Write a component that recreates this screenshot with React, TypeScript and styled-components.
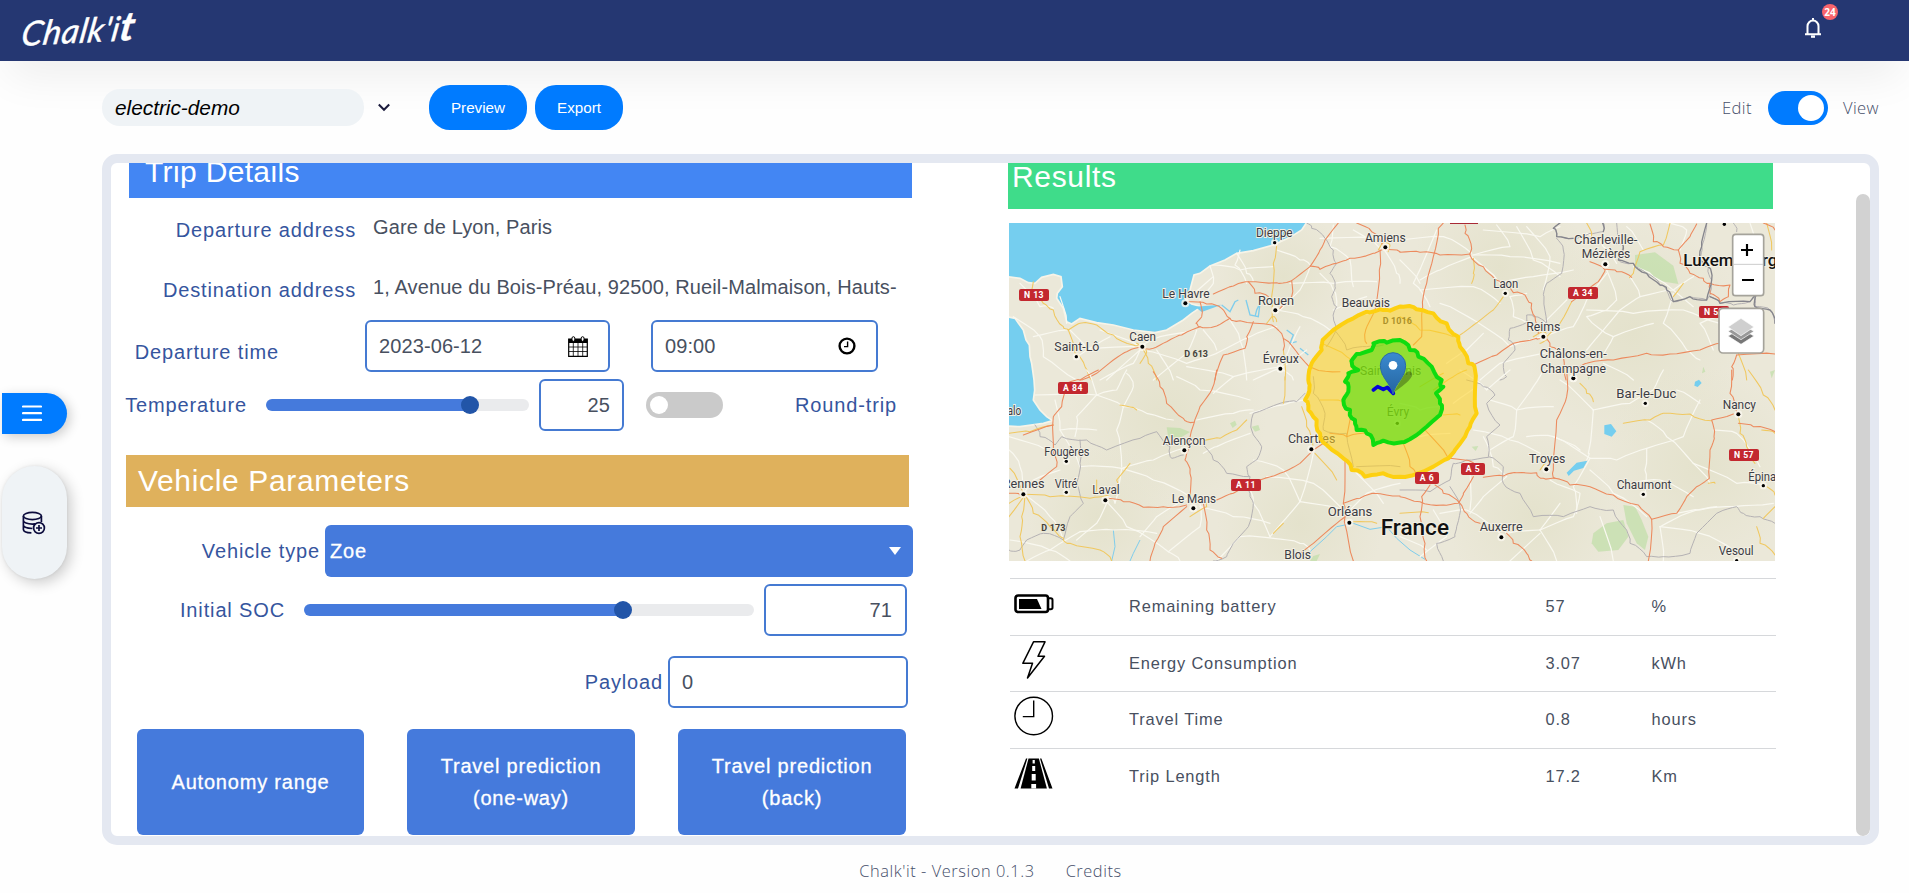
import React from 'react';
import styled, { createGlobalStyle, css } from 'styled-components';

const Global = createGlobalStyle`
  * { box-sizing: border-box; }
  body { margin: 0; background: #fefefe; font-family: 'Liberation Sans', Arial, sans-serif; overflow: hidden; }
`;

const Page = styled.div`
  width: 1909px; height: 893px; display: flex; flex-direction: column; overflow: hidden;
`;

/* ---------- header ---------- */
const Header = styled.header`
  height: 61px; flex: none; background: #253772; display: flex; justify-content: space-between;
  padding: 0 82px 0 19px; box-shadow: 0 22px 44px -8px rgba(0, 0, 0, 0.07);
`;
const Logo = styled.div`
  font: italic 400 34px/44px Lato, sans-serif; color: #fff; letter-spacing: 0.5px; margin-top: 9px;
  transform: rotate(-3deg) skewX(-12deg); transform-origin: 0 100%; height: 44px; white-space: nowrap;
  -webkit-text-stroke: 0.4px #fff;
`;
const LogoEnd = styled.span`font-size: 40px; font-weight: 700; line-height: 44px;`;
const Bell = styled.div`
  position: relative; width: 23px; margin-top: 17px; height: 22px;
`;
const Badge = styled.span`
  position: absolute; left: 18px; top: -13px; width: 16px; height: 16px; border-radius: 8px;
  background: #f8646c; color: #fff; font: 700 10px/16px 'Open Sans', sans-serif; text-align: center;
`;

/* ---------- toolbar ---------- */
const Toolbar = styled.div`
  height: 93px; flex: none; display: flex; align-items: center; padding: 0 30px 0 102px;
`;
const ProjectName = styled.div`
  width: 262px; height: 37px; border-radius: 18px; background: #eff3f6; padding-left: 13px;
  font: italic 20.8px/37px 'Liberation Sans', sans-serif; color: #000;
`;
const Chevron = styled.svg`margin: 0 38px 0 13px;`;
const Pill = styled.button<{ $w: number }>`
  width: ${p => p.$w}px; height: 45px; border: 0; border-radius: 21px; background: #007bff; color: #fff;
  font: 15.2px 'Liberation Sans', sans-serif; margin-right: 8px; padding: 0;
`;
const ModeSwitch = styled.div`
  margin-left: auto; display: flex; align-items: center; color: #464f6a;
  font: 300 16.6px 'Open Sans', sans-serif; letter-spacing: 0.4px;
`;
const Toggle = styled.span`
  width: 60px; height: 34px; border-radius: 17px; background: #007bff; margin: 0 15px 0 16px;
  display: flex; align-items: center; justify-content: flex-end; padding-right: 4px;
  &::after { content: ''; width: 26px; height: 26px; border-radius: 50%; background: #fff; }
`;

/* ---------- main ---------- */
const Main = styled.main`display: flex; height: 691px; flex: none;`;
const Side = styled.aside`
  width: 102px; flex: none; padding: 239px 0 0 2px; display: flex; flex-direction: column; gap: 32px;
`;
const MenuTab = styled.div`
  width: 65px; height: 41px; background: #007bff; border-radius: 0 21px 21px 0; padding: 12px 0 0 20px;
  box-shadow: 3px 3px 12px rgba(0, 0, 0, 0.2);
`;
const ToolPill = styled.div`
  width: 65px; height: 113px; background: #eff3f6; border-radius: 33px; display: flex; padding-right: 1px;
  align-items: center; justify-content: center; box-shadow: 4px 4px 14px rgba(0, 0, 0, 0.2), 0 0 3px rgba(0,0,0,.08);
`;
const Panel = styled.section`
  width: 1777px; height: 691px; border: 9px solid #e4e8f1; border-radius: 15px; background: #fff;
  display: flex; overflow: hidden;
`;
const Left = styled.div`width: 897px; flex: none; display: flex; flex-direction: column;`;
const Right = styled.div`width: 848px; flex: none;`;
const ScrollThumb = styled.div`width: 14px; height: 642px; margin-top: 31px; border-radius: 7px; background: #d2d2d2;`;

const Bar = styled.div<{ $bg: string; $h: number; $line: number; $ml: number; $w: number; $pad: number; $mt?: number; $ls?: number }>`
  flex: none; width: ${p => p.$w}px; height: ${p => p.$h}px; margin: ${p => p.$mt ?? 0}px 0 0 ${p => p.$ml}px;
  padding-left: ${p => p.$pad}px; background: ${p => p.$bg}; color: #fff; font-size: 30px;
  line-height: ${p => p.$line}px; letter-spacing: ${p => p.$ls ?? 0.65}px; white-space: nowrap;
`;
const Row = styled.div<{ $h?: number; $mt?: number }>`
  flex: none; display: flex; align-items: center; height: ${p => p.$h ?? 52}px; margin-top: ${p => p.$mt ?? 0}px;
  font-size: 20px; white-space: nowrap;
`;
const Label = styled.label<{ $w: number; $drop?: number; $align?: string }>`
  width: ${p => p.$w}px; flex: none; text-align: ${p => p.$align ?? 'right'}; color: #35559e; letter-spacing: 0.86px;
  padding-top: ${p => p.$drop ?? 0}px;
`;
const Value = styled.span`margin: 0 0 6px 17px; color: #48505f; letter-spacing: 0.11px;`;
const Field = styled.div<{ $w: number; $ml: number; $right?: boolean; $pr?: number }>`
  width: ${p => p.$w}px; height: 52px; margin-left: ${p => p.$ml}px; flex: none; border: 2px solid #457ad2; border-radius: 6px;
  display: flex; align-items: center; justify-content: space-between; padding: 0 ${p => p.$pr ?? 12}px 0 12px;
  color: #48505f; background: #fff; letter-spacing: 0.1px;
  ${p => p.$right && css`justify-content: flex-end;`}
`;
const Track = styled.div<{ $w: number; $ml: number; $fill: number }>`
  width: ${p => p.$w}px; height: 12px; flex: none; margin-left: ${p => p.$ml}px; border-radius: 6px; display: flex; align-items: center;
  background: linear-gradient(to right, #457adc ${p => p.$fill}px, #eaebed ${p => p.$fill}px);
  &::after { content: ''; width: 18px; height: 18px; border-radius: 50%; background: #2255a8; margin-left: ${p => p.$fill - 9}px; }
`;
const SmallSwitch = styled.div`
  width: 77px; height: 26px; border-radius: 13px; background: #cacaca; margin-left: 22px; padding: 4px; flex: none;
  &::after { content: ''; display: block; width: 18px; height: 18px; border-radius: 50%; background: #fff; }
`;
const Select = styled.div`
  width: 588px; height: 52px; margin-left: 5px; border-radius: 6px; background: #457adc; color: #fff; letter-spacing: 0.8px;
  display: flex; align-items: center; justify-content: space-between; padding: 0 12px 0 5px; -webkit-text-stroke: 0.3px #fff;
`;
const Actions = styled.div`
  display: grid; grid-template-columns: 227px 228px 228px; column-gap: 43px; margin: 21px 0 0 26px; height: 106px; flex: none;
`;
const Action = styled.button`
  border: 0; border-radius: 6px; background: #457adc; color: #fff; font: 20px/32px 'Liberation Sans', sans-serif;
  letter-spacing: 0.8px; padding: 0 20px; -webkit-text-stroke: 0.3px #fff;
`;

/* ---------- results ---------- */
const MapSvg = styled.svg`display: block; margin: 14px 0 17px 1px;`;
const Results = styled.div`margin-left: 2px; width: 766px; color: #48505f; font-size: 16.4px; letter-spacing: 0.85px;`;
const ResultRow = styled.div<{ $h: number }>`
  display: grid; grid-template-columns: 119px 416.5px 106px 1fr; height: ${p => p.$h}px; border-top: 1px solid #d6d8db;
  line-height: 54px;
`;
const IconCell = styled.div<{ $t: number }>`padding: ${p => p.$t}px 0 0 4px; line-height: 0;`;

const Footer = styled.footer`
  display: flex; justify-content: center; gap: 31px; padding: 14px 0 0 72px; color: #464f6a;
  font: 300 16.4px/23px 'Open Sans', sans-serif; letter-spacing: 0.56px;
`;

/* ---------- map data: 3 units per pixel, split in four tiles ---------- */
type Tile = { x: number; y: number; white: string[]; orange: string[]; yellow: string[]; border: string[] };
const tiles: Tile[] = [
  {
    x: 0, y: 0,
    white: [
      '630,348 640,400 600,450', '710,310 740,370 760,395', '720,300 705,345 740,400', '960,370 1000,420 1010,470', '1000,225 990,290 1050,330 1060,410',
      '830,300 900,330 930,345', '960,265 1120,265 1200,270', '870,400 1000,400 1130,395', '640,380 560,450', '820,350 720,360 640,345',
      '40,500 120,560 130,620 230,690', '100,560 200,540', '210,540 260,600 420,590', '230,620 330,560', '300,540 420,590 480,560 580,540',
      '320,690 420,600 560,640 650,610', '470,600 520,690', '460,690 560,610 590,540', '650,610 750,560 830,530', '560,650 700,680 850,650 920,600',
      '690,510 720,570 740,690', '610,540 650,600', '760,690 840,655 870,590 900,530', '850,660 880,690', '830,480 910,500 990,540', '1000,480 1100,440',
      '1150,295 1190,370 1200,400', '1060,240 1140,295', '840,480 900,420 930,350', '180,440 200,520', '60,400 120,470 160,475', '420,600 400,640 300,690',
    ],
    orange: [
      '640,432 700,408 745,395 830,398 875,392 930,350 960,300 975,270 1015,219', '930,348 960,358 1010,340 1050,325 1120,310 1150,298',
      '1070,219 1115,245 1150,290', '1150,298 1200,305', '1140,300 1138,360 1125,480 1097,540 1100,580', '560,455 620,462 665,475 690,505 720,512 815,525 850,565 900,620 940,655 1020,665',
      '745,395 765,430 805,440', '875,392 875,440 840,475', '600,455 605,500 588,520 600,530 650,528 690,505', '600,530 545,555 500,575 460,595 425,590',
      '425,590 380,605 340,630 290,670 240,690', '760,515 740,560 735,595 670,615 645,690', '850,565 850,600',
    ],
    yellow: [
      '100,395 90,430 130,460 160,480 190,530 205,540 240,520 290,525 340,555 400,585 425,590', '205,540 225,610 255,650 275,690', '830,285 820,340 815,440 820,515',
      '425,590 445,640 470,690', '850,600 855,690', '800,520 815,500 830,515', '410,580 440,605 420,640', '1135,300 1145,280 1170,285 1165,305',
      '965,580 1040,620 1060,660',
    ],
    border: ['920,219 935,235 975,265 1000,300 1010,340 990,370 1005,410 995,440 1010,470 1000,500 1008,540 980,590', '1008,545 1040,600 1100,590 1150,585'],
  },
  {
    x: 1200, y: 0,
    white: [
      '0,270 130,260 215,310', '110,240 40,400 90,470', '290,225 330,290 220,315', '250,240 420,260 480,230', '215,315 330,320 480,340', '350,230 400,330 480,380',
      '215,320 120,360 60,390', '215,320 300,400 400,380 520,360', '60,420 220,410 300,460', '230,515 120,460', '230,515 330,590 430,560', '430,560 520,530 560,450 620,370',
      '430,550 340,500 330,440 380,430', '620,360 650,450 620,480 560,500 640,560', '690,380 720,440 660,480 560,600', '720,440 820,420 880,380', '560,480 700,490 850,480 960,520',
      '600,630 640,560 760,520', '820,430 790,520 860,600 900,630', '610,640 700,690', '250,550 200,600 140,640', '0,330 60,400', '500,450 430,520', '650,340 610,290 560,250',
      '730,300 680,230', '880,470 760,380 700,350', '940,600 900,520 960,500', '840,300 860,240 800,219', '1050,219 1070,300', '480,600 300,640 240,690', '380,230 450,320 430,420',
    ],
    orange: [
      '130,219 115,235 100,320 80,400 68,470 65,560 40,585', '0,307 60,307 120,315 210,312', '195,225 195,250 215,295 210,315 250,350 285,388 340,428 375,435 395,460 405,500 415,550',
      '220,645 290,615 340,580 410,565 430,560', '435,560 450,590 490,620 498,690', '530,655 560,640 640,630 740,610 810,612 900,600 960,580', '570,335 615,360 595,395 565,415 515,455',
      '615,358 650,365 695,382', '750,222 760,275 790,290 835,300 870,260 890,222', '835,300 840,340 870,370 910,385 930,400 930,430 960,455 985,440 990,405 930,400', '1010,615 1125,612', '1010,615 995,650 997,690', '1090,219 1125,240',
    ],
    yellow: [
      '220,325 220,370 215,400', '310,440 280,480 235,515 180,555', '515,455 480,520 440,560', '400,560 430,545 440,570 420,580', '560,219 575,260 560,280', '810,219 790,285 720,305 700,370 690,382', '850,400 820,440',
      '1015,610 1040,690', '1100,219 1115,300', '0,500 60,540 160,560',
    ],
    border: [
      '480,219 460,235 470,260 520,265 570,250 610,245 608,219', '470,265 490,300 485,370 440,400 432,440 440,520 400,500 380,495 385,515 330,535 325,570 345,600 310,640 320,680 300,690',
      '650,219 650,280 670,290 655,330 700,340 740,370 780,405 800,420 820,455 870,440 920,450 930,430 935,390 925,350 900,330 905,290 920,219', '1000,219 1010,245', '930,440 960,460 1000,465 1050,455 1070,430 1065,470 1110,480 1125,520',
    ],
  },
  {
    x: 0, y: 660,
    white: [
      '105,75 290,75 350,60 380,0', '290,75 260,0', '290,75 230,140 225,200', '290,75 370,110 440,130 520,150', '370,110 350,180 365,290', '370,110 400,50 380,10', '165,90 180,180 290,180',
      '180,180 240,290 365,295', '365,295 460,270 550,235', '365,295 460,330 570,380', '365,295 345,400 320,380', '570,380 470,440 420,500', '320,395 380,470 505,545', '505,545 600,470 600,400',
      '505,545 540,573', '600,410 700,440 810,460', '810,500 900,395 940,250', '810,500 760,400 740,340', '900,395 1030,420', '900,395 850,300 760,270', '750,190 650,230 610,250', '750,130 850,105 920,90',
      '590,150 700,130 760,120', '240,485 340,480 470,490', '240,485 150,540 80,573', '180,300 100,330 70,370', '27,200 140,240 200,270', '70,370 150,440 190,510', '320,400 290,460 230,510', '70,373 60,290 27,240',
      '640,70 700,20', '530,20 600,60 750,90', '1040,430 940,340 800,320', '820,505 900,520 930,540', '820,505 720,500 650,573', '1040,430 1100,370 1200,340', '210,573 150,540 30,510', '1060,300 1150,400',
    ],
    orange: [
      '295,0 240,30 200,40 185,110 160,140 160,250 170,290 120,330', '460,5 480,50 500,100 550,145 582,157', '650,0 635,60 600,110 582,160 565,240 555,270 570,310 570,380', '325,385 370,395 430,412 490,410 560,405',
      '650,390 700,370 780,330 840,310 900,280 940,240', '940,240 980,215', '560,410 490,470 465,520 450,573', '610,400 620,480 630,540 665,565', '1035,270 1030,400 1033,455 1060,573', '1050,430 1010,460 940,520 900,550',
      '1030,400 1080,385 1120,370 1200,378', '70,195 160,165', '27,370 60,375', '990,190 1040,200 1100,190', '1040,200 1050,130',
    ],
    yellow: [
      '27,190 90,185 160,165', '75,373 150,380 270,385 325,375', '75,375 65,440 60,500 75,573', '75,375 27,440', '75,375 27,400', '75,375 100,430 150,470 190,505 210,520 300,540 335,573', '70,370 30,295', '290,330 285,375', '390,280 350,330 345,375',
      '600,380 620,410 570,440', '610,212 660,205 710,180 740,150', '855,20 850,100', '905,110 920,170 940,240', '945,250 1010,330', '960,90 1030,95', '1060,455 1130,460', '850,460 820,490', '360,105 410,120',
    ],
    border: [
      '105,165 120,200 165,225 185,200 260,210 320,240 420,205 470,185 510,230 515,265 550,255', '240,210 240,280 230,340 250,400 210,440 190,510 130,490 80,510 60,540 27,540', '610,225 640,270 680,310 750,320 750,370 760,400 745,470 700,520 680,560 640,573',
      '915,70 890,95 840,100 760,130 755,180 785,230 770,270 740,290 750,320', '940,20 940,70 975,130 970,180 1040,190 1060,290', '1070,290 1200,290',
    ],
  },
  {
    x: 1200, y: 660,
    white: [
      '270,90 350,120 460,110', '350,120 340,200 270,240', '350,120 400,50 430,0', '580,120 480,30', '580,120 565,250 560,270', '580,120 690,100 760,60 790,0', '570,265 460,200 380,200', '570,265 650,270 740,235 850,200 900,90',
      '740,235 735,300 735,370', '570,265 520,350 530,430', '420,480 320,490 280,480', '420,480 520,440 540,370 450,330', '420,480 470,573', '320,320 250,380 210,430', '320,320 280,290 250,200', '570,300 640,370 740,440',
      '780,470 860,430 950,410', '780,470 900,490 1000,540', '780,470 790,573', '830,430 900,420 1000,410 1120,400', '880,280 1010,340 1090,345', '880,280 800,200 740,150', '880,280 930,340', '210,300 210,420', '330,573 420,490', '180,0 260,60 330,0',
      '420,250 330,210 220,180', '100,420 140,500 60,560', '0,100 60,120 130,110', '150,190 60,200', '940,180 1010,190 1080,290', '600,440 640,573', '880,380 780,330 690,340', '120,430 200,420 300,490', '900,100 830,60', '460,200 540,240', '480,400 420,480',
      '0,500 80,540', '230,50 160,100',
    ],
    orange: [
      '500,0 500,80 470,150 460,300 465,325', '150,265 220,278', '250,322 310,318 350,308 410,308 430,325 465,325 510,345 570,350 640,375 715,405 755,448 745,573', '755,448 830,430 860,380 890,350 928,325 930,240 942,200 935,150 1000,132', '995,0 990,70 1010,130',
      '1015,160 1060,170 1125,185', '105,345 130,370 180,400 200,430 240,460', '220,320 190,370 175,400 130,405 60,395 0,380', '90,345 65,380 60,440 75,520 80,573', '320,490 340,520 380,550 395,573', '75,180 145,265', '10,220 30,290 60,340',
    ],
    yellow: [
      '540,40 560,70 580,95', '670,160 750,150 790,130 870,132 935,152', '1015,140 1020,190 1040,230 1065,280', '1100,350 1125,375', '1045,0 1090,75 1125,120', '1070,470 1080,520 1125,555', '0,430 85,428', '925,340 945,340',
      '1090,445 1125,410', '100,60 160,20 200,0', '130,135 180,135', '420,300 440,270', '1085,180 1125,190', '60,50 130,10',
    ],
    border: [
      '200,30 250,50 285,75 260,100 300,165 260,200 265,260 310,290 310,340 360,370 400,440 490,440 570,410 640,420 680,480 690,520 740,560 790,560 870,550 890,490 950,430 1010,410 1030,430 1080,440 1125,460',
      '0,360 90,365 150,330 160,280 200,270 265,262', '150,350 180,410 170,470 165,500 110,520 130,573',
    ],
  },
];

const cities: [string, number, number, number, number, number, number][] = [
  ['Dieppe', 768, 262, 110, 824, 278, 5], ['Amiens', 1095, 276, 122, 1156, 292, 6], ['Le Havre', 487, 443, 142, 556, 460, 6], ['Rouen', 774, 464, 108, 826, 481, 6],
  ['Beauvais', 1025, 470, 145, 1099, 487, 3], ['Caen', 388, 574, 80, 427, 590, 6], ['Saint-Lô', 163, 602, 135, 229, 620, 5], ['Évreux', 788, 639, 109, 841, 656, 6],
  ['Laon', 1480, 415, 75, 1516, 430, 5], ['Charleville-', 1722, 283, 190, 1816, 343, 6], ['Mézières', 1745, 325, 146, 1816, 343, 6], ['Reims', 1579, 542, 102, 1630, 560, 6],
  ['Châlons-en-', 1619, 625, 201, 1720, 685, 6], ['Champagne', 1621, 668, 197, 1720, 685, 6], ['Bar-le-Duc', 1849, 743, 180, 1936, 760, 5], ['Nancy', 2168, 776, 100, 2215, 793, 6],
  ['Troyes', 1587, 940, 109, 1639, 958, 6], ['Chaumont', 1850, 1017, 164, 1930, 1033, 5], ['Épinal', 2245, 993, 92, 2290, 1007, 5], ['Vesoul', 2156, 1216, 105, 2210, 1232, 5],
  ['Auxerre', 1439, 1144, 129, 1504, 1162, 6], ['Orléans', 983, 1099, 134, 1048, 1118, 6], ['Blois', 853, 1227, 80, 892, 1243, 4], ['Alençon', 488, 885, 129, 553, 901, 6],
  ['Fougères', 133, 917, 135, 199, 934, 5], ['Vitré', 164, 1013, 68, 199, 1027, 5], ['Laval', 277, 1033, 82, 316, 1051, 6], ['Rennes', 8, 1014, 126, 70, 1033, 6], ['Le Mans', 515, 1059, 133, 580, 1075, 6],
  ['Chartres', 864, 880, 142, 934, 898, 6], ['St-Malo', -40, 796, 104, -20, 800, 5], ['Saint-Denis', 1080, 675, 184, 1180, 700, 0], ['Évry', 1160, 797, 68, 1192, 820, 5],
];
const shields: [string, number, number, number][] = [
  ['N 13', 57, 417, 90], ['A 34', 1704, 411, 90], ['N 52', 2097, 468, 90], ['A 84', 174, 696, 90], ['A 11', 693, 987, 90], ['A 5', 1383, 939, 72], ['A 6', 1245, 966, 72], ['N 57', 2187, 897, 90],
];

/* adds small teeth between the corner points of an outline */
const jagged = (pts: string, steps: number, size: number) => {
  const p = pts.split(' ').map(s => s.split(',').map(Number));
  const out: string[] = [];
  p.forEach(([x, y], i) => {
    const [nx, ny] = p[(i + 1) % p.length];
    for (let k = 0; k < steps; k++) {
      const t = k / steps;
      const n = k === 0 ? 0 : Math.sin((i * steps + k) * 12.9) * size;
      out.push(`${(x + (nx - x) * t + n).toFixed(1)},${(y + (ny - y) * t - n).toFixed(1)}`);
    }
  });
  return out;
};
/* same for an open line: the stretch that closes the loop is dropped */
const wavy = (pts: string) => {
  const last = pts.split(' ').pop();
  return [...jagged(pts, 4, 4).slice(0, -4), last].join(' ');
};
const wide = jagged('1100,485 1060,505 1000,540 968,570 965,600 935,640 925,690 928,715 915,750 925,780 950,810 960,850 980,885 1030,925 1055,960 1095,980 1150,970 1200,980 1260,968 1300,950 1345,925 1365,900 1395,860 1410,830 1430,790 1425,720 1425,660 1405,640 1380,590 1375,560 1340,520 1300,490 1250,478 1210,470 1170,482 1140,478', 3, 5).join(' ');
const near = jagged('1200,570 1160,578 1120,580 1115,600 1070,612 1055,635 1075,660 1045,670 1035,695 1045,725 1030,750 1050,780 1065,810 1070,840 1100,850 1120,885 1150,872 1205,877 1250,855 1280,830 1320,795 1320,760 1308,730 1330,710 1325,690 1295,650 1255,620 1230,600', 3, 6).join(' ');

const Lines = ({ list, color, w }: { list: string[]; color: string; w: number }) => (
  <g fill="none" stroke={color} strokeWidth={w} strokeLinejoin="round" strokeLinecap="round">
    {list.map((p, i) => <polyline key={i} points={p} />)}
  </g>
);

const MapView = () => (
  <MapSvg width="766" height="338" viewBox="27 219 2298 1014" fontFamily="Roboto, sans-serif">
    <defs>
      <radialGradient id="relief"><stop offset="0" stopColor="#e4e2cc" /><stop offset="1" stopColor="#e4e2cc" stopOpacity="0" /></radialGradient>
      <linearGradient id="pin" x1="0" y1="0" x2="0" y2="1"><stop offset="0" stopColor="#3b8ad0" /><stop offset="1" stopColor="#2565a0" /></linearGradient>
    </defs>
    <rect x="27" y="219" width="2298" height="1014" fill="#ebe8d9" />
    {[[500, 800, 300], [850, 380, 200], [1900, 550, 340], [2100, 950, 300], [1600, 1100, 260], [1500, 350, 260], [300, 1100, 220], [900, 1120, 250]].map(([x, y, r]) => (
      <circle key={x} cx={x} cy={y} r={r} fill="url(#relief)" />
    ))}
    <g fill="#b9dea0" opacity="0.6">
      <path d="M500 832l40 2 30 12-25 15-40 2z" />
      <path d="M1905 315l60-8 55 40 15 55-50-8-40-25-40-15z" />
      <path d="M1870 1065l35 5 20 40 20 50-10 40-25-20-30-60z" />
      <path d="M1780 1150l40-30 50-10 15 50-30 40-60 5-20-25z" />
      <path d="M1760 660l15 10-10 20zM755 830l20-5 5 15-15 5zM690 820l15-8 5 12-12 10zM1415 890l20-2-8 15zM2110 650l6 15-10 5zM940 1218l20-6-10 21h-20zM2325 660l-15 5 5 20z" />
    </g>
    <g fill="#75ceef" stroke="#f7f4e8" strokeWidth="5">
      <path d="M20 210H925L905 240 870 262 820 285 760 302 710 310 675 330 630 348 600 370 582 375 570 420 557 448 575 462 605 470 575 490 550 510 500 540 465 548 400 540 340 525 290 518 240 505 215 522 200 515 190 475 170 445 172 430 187 410 183 380 160 373 125 382 105 400 85 398 60 385 20 380Z" />
      <path d="M20 500L45 505 70 540 78 570 88 585 90 620 95 640 102 690 104 720 100 750 120 780 140 800 158 812 130 820 60 830 20 828Z" />
    </g>
    <g fill="#75ceef">
      <path d="M1813 826l20-4 16 22-14 16-22-8z" /><path d="M1700 968l30-30 32-6-12 22-28 8-16 16zM2085 695l12-6 8 10-12 12-10-4z" />
      <path d="M585 470l80-6-60 22z" />
    </g>
    <g fill="none" stroke="#7fcdec" strokeWidth="4">
      <polyline points="665,465 690,485 705,455 715,450" /><polyline points="738,450 750,495 775,500 780,460 770,480 765,500" />
      <polyline points="860,540 880,555 870,580 890,575" /><polyline points="900,595 925,615" /><polyline points="340,1140 345,1190 335,1233" strokeWidth="3" />
      <polyline points="420,1170 400,1210 390,1233" strokeWidth="3" /><polyline points="930,1205 980,1160 1010,1130 1060,1120 1110,1138 1160,1130 1190,1165 1230,1200 1275,1228" strokeWidth="3" />
    </g>
    {tiles.map(t => (
      <g key={`${t.x}-${t.y}`} transform={`translate(${t.x} ${t.y})`}>
        <Lines list={t.white.map(wavy)} color="#f9f8f0" w={3.6} />
        <Lines list={t.border.map(wavy)} color="#b5b2b4" w={3} />
        <Lines list={t.yellow.map(wavy)} color="#f0c860" w={3.2} />
        <Lines list={t.orange.map(wavy)} color="#ec8a5e" w={3.2} />
      </g>
    ))}
    <Lines list={['1850,280 1870,290 1855,330 1900,340 1940,370 1980,405 2000,420 2020,455 2070,440 2120,450 2135,390 2125,350 2100,330 2105,290 2120,219', '1680,219 1660,235 1670,260 1720,265', '1808,219 1810,245', '2130,440 2160,460 2250,455 2270,430 2265,470 2310,480 2325,520'].map(wavy)} color="#85858c" w={4} />
    <g fontSize="40" fill="#3c3c44">
      {cities.map(([n, x, y, w, dx, dy, r]) => (
        <g key={n}>
          {r > 0 && <circle cx={dx} cy={dy} r={r + 6} fill="#faf8ef" opacity="0.8" />}
          {r > 0 && <circle cx={dx} cy={dy} r={r} fill="#000" />}
          <text x={x} y={y} textLength={w} lengthAdjust="spacingAndGlyphs" stroke="#f3f0e4" strokeWidth="6" paintOrder="stroke">{n}</text>
        </g>
      ))}
      <circle cx="2173" cy="223" r="5" fill="#000" />
      <g fontWeight="700" fontSize="27" fill="#44423c">
        <text x="553" y="622" textLength="71">D 613</text>
        <text x="1148" y="521" textLength="88">D 1016</text>
        <text x="124" y="1142" textLength="72">D 173</text>
      </g>
      <text x="1142" y="1155" textLength="205" lengthAdjust="spacingAndGlyphs" fontSize="64" fontWeight="500" fill="#111" stroke="#f3f0e4" strokeWidth="6" paintOrder="stroke">France</text>
      <text x="2050" y="347" textLength="282" lengthAdjust="spacingAndGlyphs" fontSize="49" fontWeight="500" fill="#111" stroke="#f3f0e4" strokeWidth="6" paintOrder="stroke">Luxembourg</text>
    </g>
    <rect x="1350" y="210" width="84" height="12" fill="#a82a35" />
    <polygon points={wide} fill="#ffd21e" fillOpacity="0.55" stroke="#fdd010" strokeWidth="12" strokeLinejoin="round" />
    {shields.map(([n, x, y, w]) => (
      <g key={n}>
        <rect x={x} y={y} width={w} height="36" rx="6" fill="#c3282f" />
        <text x={x + w / 2} y={y + 28} textAnchor="middle" fontSize="26" fontWeight="700" letterSpacing="1.5" fill="#fff">{n}</text>
      </g>
    ))}
    <polygon points={near} fill="#3fe000" fillOpacity="0.55" stroke="#0fdc0f" strokeWidth="12" strokeLinejoin="round" />
    <polyline points="1120,720 1133,710 1150,718 1162,712 1180,730" fill="none" stroke="#0606d8" strokeWidth="11" strokeLinecap="round" strokeLinejoin="round" />
    <path d="M1180 728L1212 675Q1228 655 1236 670T1180 728" fill="#000" opacity="0.3" />
    <path d="M1179 732C1172 700 1141 682 1141 646a38 38 0 0 1 76 0C1217 682 1186 700 1179 732Z" fill="url(#pin)" stroke="#2a6aa8" strokeWidth="3" />
    <circle cx="1179" cy="646" r="13" fill="#fff" />
    <g stroke="#a5a39b" strokeWidth="5">
      <rect x="2198" y="253" width="93" height="184" rx="9" fill="#fff" />
      <rect x="2157" y="475" width="134" height="134" rx="12" fill="#fff" />
      <path d="M2200 343H2289" stroke="#ccc" strokeWidth="3" />
    </g>
    <path d="M2223 300H2259M2241 282V318M2226 390H2262" stroke="#000" strokeWidth="6.5" />
    <g stroke="#fff" strokeWidth="2">
      <path d="M2184 558L2223 536 2262 558 2223 583Z" fill="#777" />
      <path d="M2184 544L2223 522 2262 544 2223 569Z" fill="#999" />
      <path d="M2184 531L2223 505 2262 531 2223 557Z" fill="#cfcfcf" />
    </g>
  </MapSvg>
);

const CalendarIcon = () => (
  <svg width="20" height="21" viewBox="0 0 20 21">
    <path d="M.7 3h18.6v17.3H.7z" fill="#fff" stroke="#000" strokeWidth="1.2" />
    <path d="M.7 3h18.6v4H.7z" />
    <path d="M5.3 7v13M10 7v13M14.7 7v13M1 11h18M1 15.5h18" stroke="#000" strokeWidth=".8" />
    <rect x="4" y=".7" width="2.8" height="4.6" rx="1.4" fill="#fff" stroke="#000" /><rect x="13.2" y=".7" width="2.8" height="4.6" rx="1.4" fill="#fff" stroke="#000" />
  </svg>
);
const ClockSmall = () => (
  <svg width="18" height="18" viewBox="0 0 18 18" fill="none" stroke="#000">
    <circle cx="9" cy="9" r="7.4" strokeWidth="2.4" /><path d="M9.6 4.5V9.6H6" strokeWidth="1.4" />
  </svg>
);
const BatteryIcon = () => (
  <svg width="40" height="20" viewBox="0 0 40 20">
    <rect x="1.5" y="1.5" width="32.5" height="16.5" rx="2.5" fill="none" stroke="#000" strokeWidth="2.6" />
    <path d="M5 5H23L27.5 15H5z" /><path d="M35 4.2h1.8a1.7 1.7 0 0 1 1.7 1.7v7.6a1.7 1.7 0 0 1-1.7 1.7H35" fill="none" stroke="#000" strokeWidth="2" />
  </svg>
);
const BoltIcon = () => (
  <svg width="40" height="40" viewBox="0 0 40 40" fill="none" stroke="#000" strokeWidth="1.5" strokeLinejoin="round">
    <path d="M19.5 1.8H31L24 16.3H30.5L13.5 38 18.5 23.3H8.8Z" />
  </svg>
);
const ClockIcon = () => (
  <svg width="40" height="40" viewBox="0 0 40 40" fill="none" stroke="#000" strokeWidth="1.4">
    <circle cx="19.7" cy="20" r="18.8" /><path d="M19.7 4.5V20.6H8.8" />
  </svg>
);
const RoadIcon = () => (
  <svg width="40" height="31" viewBox="0 0 40 31">
    <path d="M12 .6h1.4L4 30.4H.5zM26 .6h1.4L38.5 30.4H35z" /><path d="M14.5.6h10.4l8 29.8H6.6z" />
    <path d="M18.6 2h2.2v3.500h-2.200zM18.200 8h3v5h-3zM17.700 16h4v6.500h-4zM17.300 26h4.800v4.400h-4.800z" fill="#fff" />
  </svg>
);
const DatabaseIcon = () => (
  <svg width="24" height="24" viewBox="0 0 24 24" fill="none" stroke="#0b0b3c" strokeWidth="1.7">
    <ellipse cx="10.4" cy="5" rx="9" ry="3.6" />
    <path d="M1.4 5v13.4c0 2 3.5 3.3 8 3.5M19.4 5v6M1.4 9.5c0 2 4 3.6 9 3.6 1.2 0 2-.1 3-.2M1.4 14c0 1.8 3.6 3.3 9 3.5" />
    <circle cx="17" cy="17" r="5.4" /><path d="M17 14v6M14 17h6" />
  </svg>
);

const rows = [
  { icon: <BatteryIcon />, top: 15, h: 57, name: 'Remaining battery', value: '57', unit: '%' },
  { icon: <BoltIcon />, top: 4, h: 56, name: 'Energy Consumption', value: '3.07', unit: 'kWh' },
  { icon: <ClockIcon />, top: 4, h: 57, name: 'Travel Time', value: '0.8', unit: 'hours' },
  { icon: <RoadIcon />, top: 9, h: 56, name: 'Trip Length', value: '17.2', unit: 'Km' },
];

export default function App() {
  return (
    <Page>
      <Global />
      <Header>
        <Logo>Chalk'i<LogoEnd>t</LogoEnd></Logo>
        <Bell>
          <svg width="18" height="22" viewBox="0 0 18 22" fill="none" stroke="#fff" strokeWidth="2">
            <path d="M1 17.2H17M3.5 17V9.2a5.5 5.6 0 0 1 11 0V17M9 1v2.6" /><path d="M7 19.6h4" strokeWidth="2.4" />
          </svg>
          <Badge>24</Badge>
        </Bell>
      </Header>
      <Toolbar>
        <ProjectName>electric-demo</ProjectName>
        <Chevron width="14" height="9" viewBox="0 0 14 9"><path d="M1.8 1.5L7 6.8 12.2 1.5" fill="none" stroke="#1a1a3c" strokeWidth="2" /></Chevron>
        <Pill $w={98}>Preview</Pill>
        <Pill $w={88}>Export</Pill>
        <ModeSwitch>Edit<Toggle />View</ModeSwitch>
      </Toolbar>
      <Main>
        <Side>
          <MenuTab>
            <svg width="20" height="17" viewBox="0 0 20 17"><path d="M1 1.5H19M1 8.2H19M1 14.9H19" stroke="#fff" strokeWidth="2.2" strokeLinecap="round" /></svg>
          </MenuTab>
          <ToolPill><DatabaseIcon /></ToolPill>
        </Side>
        <Panel>
          <Left>
            <Bar $bg="#4386f3" $ml={18} $w={783} $h={35} $line={18} $pad={16} $ls={0.35}>Trip Details</Bar>
            <Row $h={64}><Label $w={245}>Departure address</Label><Value>Gare de Lyon, Paris</Value></Row>
            <Row $h={56}><Label $w={245}>Destination address</Label><Value>1, Avenue du Bois-Préau, 92500, Rueil-Malmaison, Hauts-</Value></Row>
            <Row $mt={2}>
              <Label $w={168} $drop={12}>Departure time</Label>
              <Field $w={245} $ml={86} $pr={20}>2023-06-12<CalendarIcon /></Field>
              <Field $w={227} $ml={41} $pr={20}>09:00<ClockSmall /></Field>
            </Row>
            <Row $mt={7}>
              <Label $w={136}>Temperature</Label>
              <Track $w={263} $ml={19} $fill={204} />
              <Field $w={85} $ml={10} $right>25</Field>
              <SmallSwitch />
              <Label $w={174}>Round-trip</Label>
            </Row>
            <Bar $bg="#dfb15c" $ml={15} $w={783} $h={52} $line={52} $pad={12} $mt={24}>Vehicle Parameters</Bar>
            <Row $mt={18}>
              <Label $w={209}>Vehicle type</Label>
              <Select>Zoe<svg width="12" height="8" viewBox="0 0 12 8"><path d="M0 0H12L6 8z" fill="#fff" /></svg></Select>
            </Row>
            <Row $mt={7}>
              <Label $w={174}>Initial SOC</Label>
              <Track $w={450} $ml={19} $fill={319} />
              <Field $w={143} $ml={10} $right $pr={13}>71</Field>
            </Row>
            <Row $mt={20}>
              <Label $w={552}>Payload</Label>
              <Field $w={240} $ml={5}>0</Field>
            </Row>
            <Actions>
              <Action>Autonomy range</Action>
              <Action>Travel prediction (one-way)</Action>
              <Action>Travel prediction (back)</Action>
            </Actions>
          </Left>
          <Right>
            <Bar $bg="#3fdc8a" $ml={0} $w={765} $h={46} $line={27} $pad={4}>Results</Bar>
            <MapView />
            <Results>
              {rows.map(r => (
                <ResultRow key={r.name} $h={r.h}>
                  <IconCell $t={r.top}>{r.icon}</IconCell><span>{r.name}</span><span>{r.value}</span><span>{r.unit}</span>
                </ResultRow>
              ))}
            </Results>
          </Right>
          <ScrollThumb />
        </Panel>
      </Main>
      <Footer><span>Chalk'it - Version 0.1.3</span><span>Credits</span></Footer>
    </Page>
  );
}
